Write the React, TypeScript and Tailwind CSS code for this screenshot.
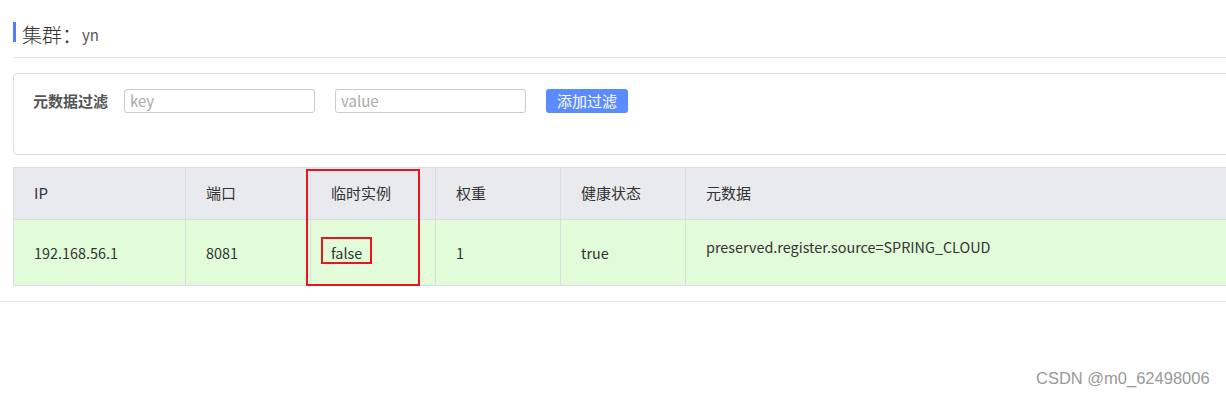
import React from "react";

const font = { fontFamily: '"Noto Sans CJK SC", "Noto Sans", sans-serif' };

export default function App() {
  const cols = ["IP", "端口", "临时实例", "权重", "健康状态", "元数据"];
  const vals = ["192.168.56.1", "8081", "false", "1", "true"];
  return (
    <div className="w-[1226px] h-[394px] bg-white overflow-hidden relative text-[#333]" style={font}>
      <div className="pl-[13px] pt-[22px]">
        <div className="flex items-center h-[20px]">
          <div className="w-[3px] h-[20px] bg-[#4f7fff]" />
          <span className="ml-[6px] pt-[5px] text-[20px] leading-[20px] text-[#333] font-light">集群{"\uFF1A"}</span>
          <span className="pt-[5px] text-[15px] leading-[20px] text-[#555]">yn</span>
        </div>
        <div className="mt-[15px] h-px bg-[#e4e4e8]" />
        <div className="mt-[15px] h-[82px] w-[1240px] border border-[#dcdde3] rounded-[4px] pl-[19px] pt-[15px]">
          <div className="flex items-center h-[24px]">
            <span className="text-[15px] font-bold text-[#555] w-[91px]">元数据过滤</span>
            <div className="w-[191px] h-[24px] border border-[#c8c9d2] rounded-[3px] px-[5px] text-[15px] leading-[22px] text-[#aaa]">key</div>
            <div className="ml-[20px] w-[191px] h-[24px] border border-[#c8c9d2] rounded-[3px] px-[5px] text-[15px] leading-[22px] text-[#aaa]">value</div>
            <div className="ml-[20px] w-[82px] h-[24px] rounded-[3px] bg-[#5a8bff] text-white text-[15px] leading-[24px] text-center">添加过滤</div>
          </div>
        </div>
        <div className="mt-[12px] w-[1240px] border border-[#dcdde3] text-[14.4px]">
          <div className="grid grid-cols-[172px_125px_125px_125px_125px_1fr] bg-[#e9eaee] h-[52px] border-b border-[#dcdde3] text-[15px]">
            {cols.map((c, i) => (
              <div key={c} className={`pl-[20px] flex items-center ${i < 5 ? "border-r border-[#dcdde3]" : ""}`}>{c}</div>
            ))}
          </div>
          <div className="grid grid-cols-[172px_125px_125px_125px_125px_1fr] bg-[#e2fcd9] h-[65px]">
            {vals.map((v, i) => (
              <div key={i} className="pl-[20px] flex items-center border-r border-[#dcdde3]">{v}</div>
            ))}
            <div className="pl-[20px] pt-[16px]">preserved.register.source=SPRING_CLOUD</div>
          </div>
        </div>
      </div>
      <div className="mt-[15px] h-px bg-[#e4e4e8]" />
      <div className="absolute left-[306px] top-[169px] w-[114px] h-[117px] border-2 border-[#e8141e]" />
      <div className="absolute left-[321px] top-[237px] w-[51px] h-[27px] border-2 border-[#e8141e]" />
      <div className="absolute left-[1036px] top-[366px] text-[16.5px] text-[#999]" style={{ fontFamily: '"Liberation Sans", sans-serif' }}>CSDN @m0_62498006</div>
    </div>
  );
}
